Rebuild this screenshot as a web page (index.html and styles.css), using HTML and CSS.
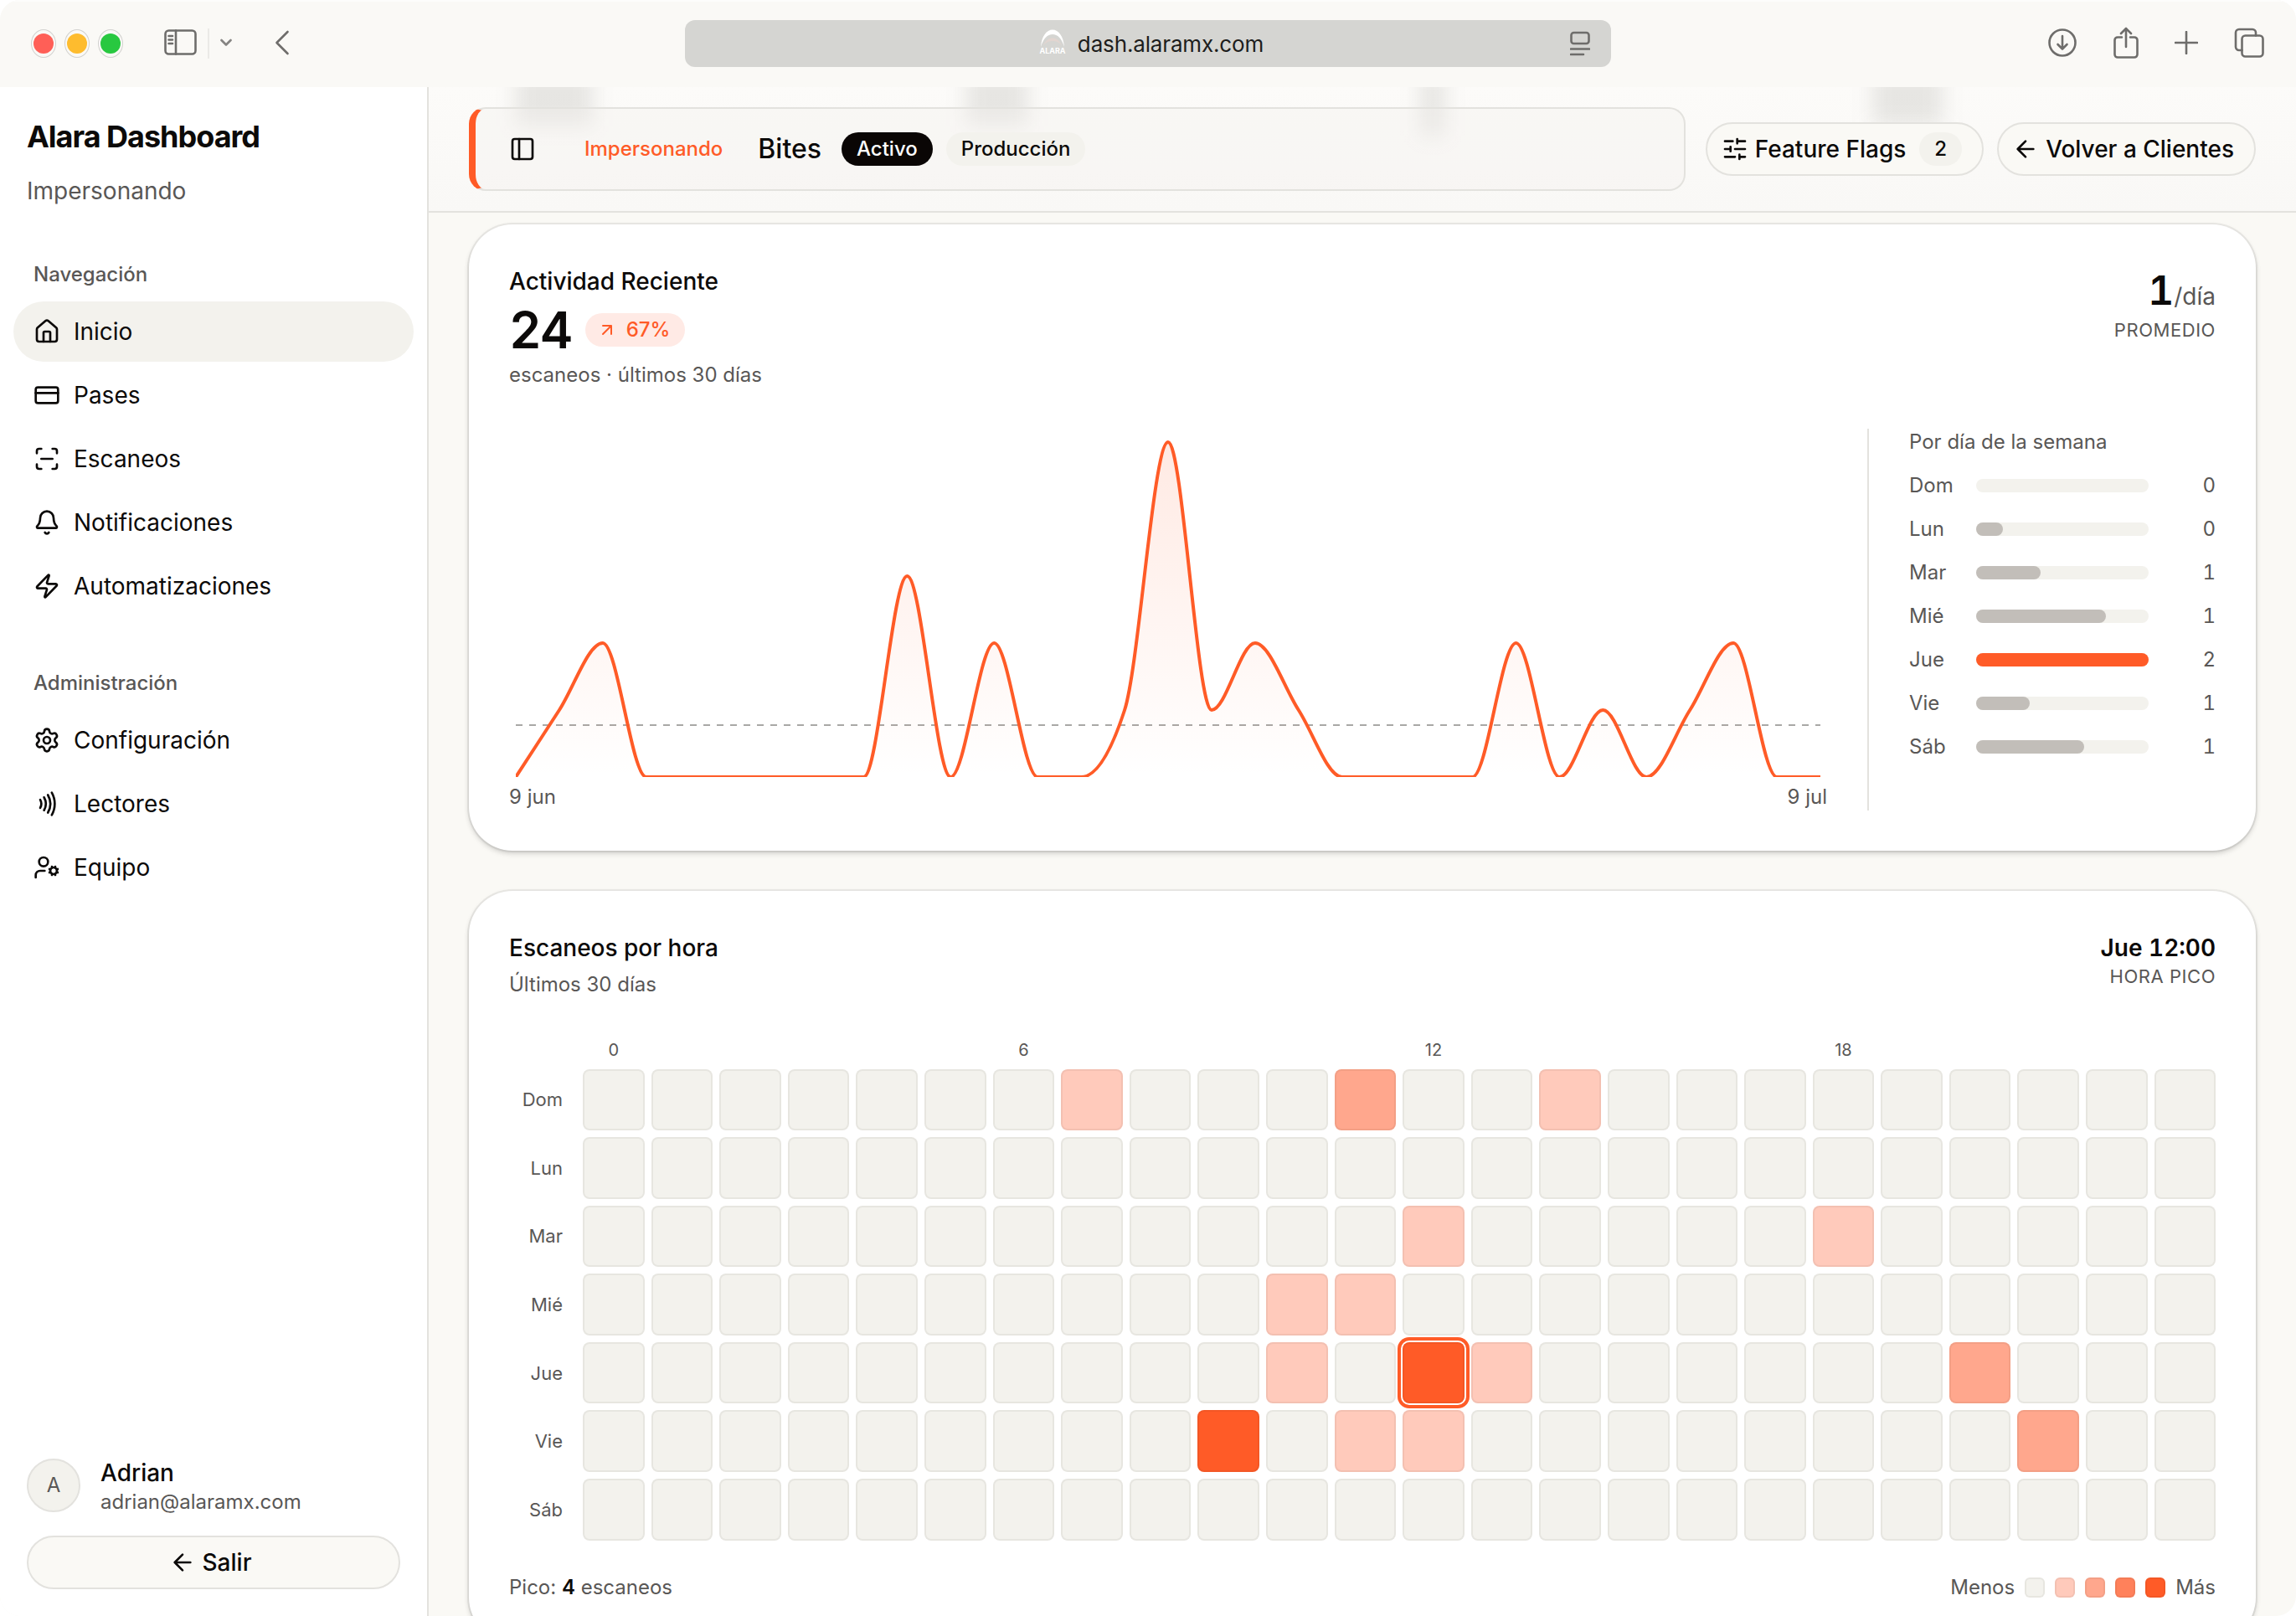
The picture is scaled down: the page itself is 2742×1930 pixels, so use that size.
FILE: index.html
```html
<!DOCTYPE html>
<html lang="es">
<head>
  <meta charset="UTF-8">
  <meta name="viewport" content="width=device-width, initial-scale=1">
  <title>Alara Dashboard</title>
  <link rel="stylesheet" href="styles.css">
</head>
<body>

<div class="window">

  <!-- Barra del navegador -->
  <div class="toolbar">
    <div class="toolbar-left">
      <div class="lights">
        <span class="light red"></span>
        <span class="light yellow"></span>
        <span class="light green"></span>
      </div>
      <svg class="tb-sidebar" width="40" height="32" viewBox="0 0 40 32">
        <rect x="1.5" y="1.5" width="36" height="28" rx="4"/>
        <path d="M14 1.5v28M5.5 8h4.5M5.5 12.5h4.5M5.5 17h4.5"/>
      </svg>
      <span class="tb-divider"></span>
      <svg class="tb-chevron" width="14" height="10" viewBox="0 0 14 10"><path d="M1.5 2l5.500 5.500L12.500 2"/></svg>
      <svg class="tb-back" width="18" height="30" viewBox="0 0 18 30"><path d="M15.500 2L2.500 15l13 13"/></svg>
    </div>

    <div class="urlbar">
      <svg class="favicon" width="34" height="34" viewBox="0 0 34 34">
        <path d="M3 22C4 9 10 1.500 17 1.500S30 9 31 22C28 12 23 7 17 7S6 12 3 22z" fill="#fff"/>
        <path d="M6 20c3-6 7-8.500 11-8.500S25 14 28 20c-4-4-7-5-11-5s-7 1-11 5z" fill="#e2d5d0"/>
        <text x="17" y="30" text-anchor="middle">ALARA</text>
      </svg>
      <span class="url">dash.alaramx.com</span>
      <svg class="reader" width="24" height="30" viewBox="0 0 24 30">
        <rect x="1.500" y="2" width="21" height="13" rx="3"/>
        <path d="M1 21.500h22M1 28h15"/>
      </svg>
    </div>

    <div class="toolbar-right">
      <svg width="36" height="36" viewBox="0 0 36 36"><circle cx="18" cy="18" r="15.500"/><path d="M18 10v15M12.500 20l5.500 5.500 5.500-5.500"/></svg>
      <svg width="30" height="38" viewBox="0 0 30 38"><path d="M10 12.500H5a3.500 3.500 0 0 0-3.500 3.500v17A3.500 3.500 0 0 0 5 36.500h20a3.500 3.500 0 0 0 3.500-3.500V16a3.500 3.500 0 0 0-3.500-3.500h-5M15 24V2M9 8l6-6 6 6"/></svg>
      <svg width="28" height="28" viewBox="0 0 28 28"><path d="M14 1v26M1 14h26"/></svg>
      <svg width="36" height="36" viewBox="0 0 36 36"><rect x="9.500" y="9.500" width="25" height="25" rx="4"/><path d="M9.500 27H6a4 4 0 0 1-4-4V6a4 4 0 0 1 4-4h16a4 4 0 0 1 4 4v3.500"/></svg>
    </div>
  </div>

  <div class="app">

    <!-- Menu lateral -->
    <aside class="sidebar">
      <div class="brand">
        <h1>Alara Dashboard</h1>
        <p>Impersonando</p>
      </div>

      <nav class="nav-group">
        <h2>Navegación</h2>
        <a class="nav-item active" href="#">
          <svg class="icon" viewBox="0 0 24 24"><path d="M15 21v-8a1 1 0 0 0-1-1h-4a1 1 0 0 0-1 1v8"/><path d="M3 10a2 2 0 0 1 .709-1.528l7-6a2 2 0 0 1 2.582 0l7 6A2 2 0 0 1 21 10v9a2 2 0 0 1-2 2H5a2 2 0 0 1-2-2z"/></svg>
          <span>Inicio</span>
        </a>
        <a class="nav-item" href="#">
          <svg class="icon" viewBox="0 0 24 24"><rect x="2" y="5" width="20" height="14" rx="2"/><path d="M2 10h20"/></svg>
          <span>Pases</span>
        </a>
        <a class="nav-item" href="#">
          <svg class="icon" viewBox="0 0 24 24"><path d="M3 7V5a2 2 0 0 1 2-2h2M17 3h2a2 2 0 0 1 2 2v2M21 17v2a2 2 0 0 1-2 2h-2M7 21H5a2 2 0 0 1-2-2v-2M7 12h10"/></svg>
          <span>Escaneos</span>
        </a>
        <a class="nav-item" href="#">
          <svg class="icon" viewBox="0 0 24 24"><path d="M10.268 21a2 2 0 0 0 3.464 0"/><path d="M3.262 15.326A1 1 0 0 0 4 17h16a1 1 0 0 0 .74-1.673C19.41 13.956 18 12.499 18 8A6 6 0 0 0 6 8c0 4.499-1.411 5.956-2.738 7.326"/></svg>
          <span>Notificaciones</span>
        </a>
        <a class="nav-item" href="#">
          <svg class="icon" viewBox="0 0 24 24"><path d="M4 14a1 1 0 0 1-.78-1.63l9.9-10.2a.5.5 0 0 1 .86.46l-1.92 6.02A1 1 0 0 0 13 10h7a1 1 0 0 1 .78 1.63l-9.9 10.2a.5.5 0 0 1-.86-.46l1.92-6.02A1 1 0 0 0 11 14z"/></svg>
          <span>Automatizaciones</span>
        </a>
      </nav>

      <nav class="nav-group">
        <h2>Administración</h2>
        <a class="nav-item" href="#">
          <svg class="icon" viewBox="0 0 24 24"><path d="M9.671 4.136a2.34 2.34 0 0 1 4.659 0 2.34 2.34 0 0 0 3.319 1.915 2.34 2.34 0 0 1 2.33 4.033 2.34 2.34 0 0 0 0 3.831 2.34 2.34 0 0 1-2.33 4.033 2.34 2.34 0 0 0-3.319 1.915 2.34 2.34 0 0 1-4.659 0 2.34 2.34 0 0 0-3.32-1.915 2.34 2.34 0 0 1-2.33-4.033 2.34 2.34 0 0 0 0-3.831A2.34 2.34 0 0 1 6.35 6.051a2.34 2.34 0 0 0 3.319-1.915"/><circle cx="12" cy="12" r="3"/></svg>
          <span>Configuración</span>
        </a>
        <a class="nav-item" href="#">
          <svg class="icon" viewBox="0 0 24 24"><path d="M6 8.32a7.43 7.43 0 0 1 0 7.36M9.46 6.21a11.76 11.76 0 0 1 0 11.58M12.91 4.1a15.91 15.91 0 0 1 .01 15.8M16.37 2a20.16 20.16 0 0 1 0 20"/></svg>
          <span>Lectores</span>
        </a>
        <a class="nav-item" href="#">
          <svg class="icon" viewBox="0 0 24 24"><path d="M10 15H6a4 4 0 0 0-4 4v2"/><path d="m14.305 16.53.923-.382M15.228 13.852l-.923-.383M16.852 12.228l-.383-.923M16.852 17.772l-.383.924M19.148 12.228l.383-.923M19.53 18.696l-.382-.924M20.772 13.852l.924-.383M20.772 16.148l.924.383"/><circle cx="18" cy="15" r="3"/><circle cx="9" cy="7" r="4"/></svg>
          <span>Equipo</span>
        </a>
      </nav>

      <div class="account">
        <div class="user">
          <span class="avatar">A</span>
          <div class="user-info">
            <p class="user-name">Adrian</p>
            <p class="user-mail">adrian@alaramx.com</p>
          </div>
        </div>
        <button class="btn logout">
          <svg class="icon" viewBox="0 0 24 24"><path d="m12 19-7-7 7-7M19 12H5"/></svg>
          <span>Salir</span>
        </button>
      </div>
    </aside>

    <main class="main">
      <header class="topbar">
        <!-- contenido que se difumina al pasar por debajo de la barra -->
        <i class="smudge s1"></i>
        <i class="smudge s2"></i>
        <i class="smudge s3"></i>
        <i class="smudge s4"></i>

        <div class="banner">
          <svg class="icon" viewBox="0 0 24 24"><rect x="3" y="3" width="18" height="18" rx="2"/><path d="M9 3v18"/></svg>
          <span class="banner-label">Impersonando</span>
          <span class="banner-name">Bites</span>
          <span class="badge dark">Activo</span>
          <span class="badge">Producción</span>
        </div>
        <button class="btn flags">
          <svg class="icon" viewBox="0 0 24 24"><path d="M10 5H3M12 19H3M14 3v4M16 17v4M21 12h-9M21 19h-5M21 5h-7M8 10v4M8 12H3"/></svg>
          <span>Feature Flags</span>
          <span class="badge">2</span>
        </button>
        <button class="btn back">
          <svg class="icon" viewBox="0 0 24 24"><path d="m12 19-7-7 7-7M19 12H5"/></svg>
          <span>Volver a Clientes</span>
        </button>
      </header>

      <div class="content">

        <!-- Actividad reciente -->
        <section class="card">
          <div class="card-head">
            <div>
              <h3>Actividad Reciente</h3>
              <div class="total">
                <strong>24</strong>
                <span class="badge trend">
                  <svg viewBox="0 0 24 24"><path d="M7 7h10v10M7 17 17 7"/></svg>
                  <span>67%</span>
                </span>
              </div>
              <p class="sub">escaneos · últimos 30 días</p>
            </div>
            <div class="stat">
              <p class="average"><strong>1</strong><span>/día</span></p>
              <p class="caption">PROMEDIO</p>
            </div>
          </div>

          <div class="activity">
            <div class="chart">
              <svg width="1574" height="424" viewBox="0 0 1574 424">
                <defs>
                  <linearGradient id="fill" x1="0" y1="16" x2="0" y2="416" gradientUnits="userSpaceOnUse">
                    <stop offset="0" stop-color="#ff5b27" stop-opacity="0.13"/>
                    <stop offset="1" stop-color="#ff5b27" stop-opacity="0"/>
                  </linearGradient>
                  <clipPath id="plot"><rect x="8" y="0" width="1558" height="416"/></clipPath>
                </defs>
                <path class="avg" d="M8 354H1566"/>
                <g clip-path="url(#plot)">
                  <path id="area" fill="url(#fill)"/>
                  <path id="line" class="line"/>
                </g>
              </svg>
              <div class="axis"><span>9 jun</span><span>9 jul</span></div>
            </div>

            <div class="weekdays">
              <h4>Por día de la semana</h4>
              <div class="day"><span>Dom</span><div class="track"></div><b>0</b></div>
              <div class="day"><span>Lun</span><div class="track"><i style="width: 15.6%"></i></div><b>0</b></div>
              <div class="day"><span>Mar</span><div class="track"><i style="width: 37.5%"></i></div><b>1</b></div>
              <div class="day"><span>Mié</span><div class="track"><i style="width: 75%"></i></div><b>1</b></div>
              <div class="day top"><span>Jue</span><div class="track"><i style="width: 100%"></i></div><b>2</b></div>
              <div class="day"><span>Vie</span><div class="track"><i style="width: 31.25%"></i></div><b>1</b></div>
              <div class="day"><span>Sáb</span><div class="track"><i style="width: 62.5%"></i></div><b>1</b></div>
            </div>
          </div>
        </section>

        <!-- Mapa de calor por hora -->
        <section class="card">
          <div class="card-head">
            <div>
              <h3>Escaneos por hora</h3>
              <p class="sub sub-gap">Últimos 30 días</p>
            </div>
            <div class="stat">
              <p class="peak-hour">Jue 12:00</p>
              <p class="caption caption-tight">HORA PICO</p>
            </div>
          </div>

          <div class="heatmap" id="heatmap"></div>

          <div class="card-foot">
            <p>Pico: <strong>4</strong> escaneos</p>
            <div class="legend">
              <span>Menos</span>
              <i class="swatch"></i>
              <i class="swatch l1"></i>
              <i class="swatch l2"></i>
              <i class="swatch l3"></i>
              <i class="swatch l4"></i>
              <span>Más</span>
            </div>
          </div>
        </section>

      </div>
    </main>
  </div>
</div>

<script src="script.js"></script>
</body>
</html>
```
FILE: script.js
```js
// Escaneos diarios, 9 jun - 9 jul
const scans = [0,1,2,0,0,0,0,0,0,3,0,2,0,0,1,5,1,2,1,0,0,0,0,2,0,1,0,1,2,0,0];

const base = 416;
const unit = 80;
const step = 1558 / (scans.length - 1);
const pts = scans.map((v, i) => [8 + i * step, base - v * unit]);

// Pendientes de una cubica monotona, para que la curva no pase de los datos
const slopes = pts.map((p, i) => {
  if (i === 0 || i === pts.length - 1) return 0;
  const a = (p[1] - pts[i - 1][1]) / step;
  const b = (pts[i + 1][1] - p[1]) / step;
  if (a * b <= 0) return 0;
  return Math.sign(a) * Math.min(Math.abs(a), Math.abs(b), Math.abs(a + b) / 4) * 2;
});
const last = pts.length - 1;
slopes[0] = (3 * (pts[1][1] - pts[0][1]) / step - slopes[1]) / 2;
slopes[last] = (3 * (pts[last][1] - pts[last - 1][1]) / step - slopes[last - 1]) / 2;

let d = `M${pts[0][0]},${pts[0][1]}`;
for (let i = 1; i < pts.length; i++) {
  const [x0, y0] = pts[i - 1];
  const [x1, y1] = pts[i];
  const t = step / 3;
  d += `C${x0 + t},${y0 + slopes[i - 1] * t} ${x1 - t},${y1 - slopes[i] * t} ${x1},${y1}`;
}
document.getElementById('line').setAttribute('d', d);
document.getElementById('area').setAttribute('d', `${d}V${base}H8Z`);

// Mapa de calor: nivel de cada hora con escaneos
const week = [
  ['Dom', { 7: 1, 11: 2, 14: 1 }],
  ['Lun', {}],
  ['Mar', { 12: 1, 18: 1 }],
  ['Mié', { 10: 1, 11: 1 }],
  ['Jue', { 10: 1, 12: 4, 13: 1, 20: 2 }],
  ['Vie', { 9: 4, 11: 1, 12: 1, 21: 2 }],
  ['Sáb', {}]
];

let html = '<span></span>';
for (let h = 0; h < 24; h++) {
  html += `<span class="hour">${h % 6 === 0 ? h : ''}</span>`;
}
week.forEach(([name, hours]) => {
  html += `<span class="row-label">${name}</span>`;
  for (let h = 0; h < 24; h++) {
    const level = hours[h] ? ` l${hours[h]}` : '';
    const peak = name === 'Jue' && h === 12 ? ' peak' : '';
    html += `<i class="cell${level}${peak}"></i>`;
  }
});
document.getElementById('heatmap').innerHTML = html;
```
FILE: styles.css
```css
:root {
  --bg: #faf9f5;
  --surface: #ffffff;
  --muted: #f3f2ed;
  --border: #e3e2de;
  --text: #0c0a09;
  --text-muted: #595756;
  --accent: #ff5b27;
  --chrome-icon: #6e6d6b;
  --font-main: Inter, "Liberation Sans", sans-serif;
}

* {
  box-sizing: border-box;
  margin: 0;
  padding: 0;
}

body {
  background: #fff;
  font-family: var(--font-main);
  font-size: 28px;
  line-height: 40px;
  color: var(--text);
  overflow: hidden;
}

.window {
  width: 2742px;
  height: 1930px;
  border-radius: 24px;
  overflow: hidden;
  background: var(--bg);
}

/* Barra del navegador */
.toolbar {
  height: 104px;
  display: grid;
  grid-template-columns: 818px 1106px 1fr;
  align-items: center;
  background: #faf9f6;
  box-shadow: inset 0 2px 0 #fdfdfc;
}

.toolbar svg {
  margin-bottom: 2px;
  fill: none;
  stroke: var(--chrome-icon);
  stroke-width: 2.6;
  stroke-linecap: round;
  stroke-linejoin: round;
}

.toolbar-left {
  display: flex;
  align-items: center;
  padding-left: 40px;
}

.lights {
  display: flex;
  gap: 16px;
}

.light {
  position: relative;
  width: 24px;
  height: 24px;
  border-radius: 50%;
}

.light::after {
  content: "";
  position: absolute;
  inset: -5px -3px;
  border: 1px solid rgba(0, 0, 0, 0.16);
  border-radius: 50%;
}

.light.red { background: #ff5f57; }
.light.yellow { background: #febc2e; }
.light.green { background: #28c840; }

.tb-sidebar { margin-left: 52px; }

.tb-divider {
  width: 2px;
  height: 36px;
  margin-left: 12px;
  background: #ebeae7;
}

.toolbar .tb-chevron {
  margin-left: 13px;
  stroke: #858482;
}

.tb-back { margin-left: 51px; }

.urlbar {
  position: relative;
  height: 56px;
  display: flex;
  align-items: center;
  justify-content: center;
  gap: 13px;
  padding-left: 7px;
  border-radius: 12px;
  background: #d5d5d2;
  color: #1d1d1c;
}

.favicon text {
  font-size: 9px;
  font-weight: 700;
  fill: #fff;
  stroke: none;
}

.toolbar .favicon { stroke: none; }

.url {
  padding-top: 1px;
  font-size: 26px;
  letter-spacing: -0.15px;
}

.reader {
  position: absolute;
  right: 25px;
  top: 13px;
}

.toolbar-right {
  display: flex;
  align-items: center;
  justify-content: flex-end;
  gap: 43px;
  padding-right: 38px;
}

/* Estructura */
.app {
  display: flex;
  height: 1826px;
}

.sidebar {
  width: 512px;
  display: flex;
  flex-direction: column;
  background: var(--surface);
  border-right: 2px solid var(--border);
  flex-shrink: 0;
}

.brand {
  padding: 31px 32px 0;
  height: 176px;
}

.brand h1 {
  font-size: 36px;
  line-height: 56px;
  font-weight: 700;
  letter-spacing: -0.028em;
}

.brand p {
  margin-top: 17px;
  color: var(--text-muted);
}

.nav-group {
  display: flex;
  flex-direction: column;
  gap: 4px;
  padding: 16px;
  margin-bottom: 16px;
}

.nav-group h2 {
  height: 64px;
  margin-bottom: -4px;
  padding-left: 24px;
  font-size: 24px;
  line-height: 64px;
  font-weight: 500;
  color: var(--text-muted);
}

.nav-item {
  height: 72px;
  display: flex;
  align-items: center;
  gap: 16px;
  padding: 0 24px;
  border-radius: 36px;
  color: var(--text);
  text-decoration: none;
}

.nav-item.active {
  background: var(--muted);
}

.icon,
.trend svg {
  width: 32px;
  height: 32px;
  flex-shrink: 0;
  fill: none;
  stroke: currentColor;
  stroke-width: 2;
  stroke-linecap: round;
  stroke-linejoin: round;
}

.account {
  margin-top: auto;
  padding: 0 32px 32px;
}

.user {
  display: flex;
  align-items: center;
  gap: 24px;
  height: 76px;
  margin-bottom: 22px;
}

.user-info { padding-top: 4px; }

.avatar {
  width: 64px;
  height: 64px;
  border: 2px solid var(--border);
  border-radius: 50%;
  background: var(--muted);
  color: var(--text-muted);
  font-size: 24px;
  line-height: 60px;
  text-align: center;
}

.user-name {
  line-height: 36px;
  font-weight: 500;
}

.user-mail {
  font-size: 24px;
  line-height: 34px;
  color: var(--text-muted);
}

.btn {
  height: 64px;
  display: flex;
  align-items: center;
  border: 2px solid var(--border);
  border-radius: 32px;
  background: var(--bg);
  color: var(--text);
  font: 500 28px/40px var(--font-main);
  white-space: nowrap;
}

.logout {
  width: 446px;
  justify-content: center;
  gap: 8px;
  padding-right: 8px;
}

/* Barra superior */
.main {
  flex: 1;
  min-width: 0;
}

.topbar {
  position: relative;
  height: 150px;
  display: flex;
  align-items: center;
  gap: 16px;
  padding: 0 48px;
  border-bottom: 2px solid var(--border);
  background: linear-gradient(#fcfbf9, #f9f8f6);
  overflow: hidden;
}

.topbar > * {
  position: relative;
}

.topbar .smudge {
  position: absolute;
  top: -20px;
  height: 66px;
  background: rgba(80, 80, 70, 0.12);
  filter: blur(12px);
}

.s1 { left: 104px; width: 92px; }
.s2 { left: 642px; width: 74px; }
.topbar .s3 { left: 1184px; width: 30px; height: 78px; }
.s4 { left: 1724px; width: 84px; }

.banner {
  flex: 1;
  height: 100px;
  display: flex;
  align-items: center;
  margin-right: 8px;
  padding-left: 40px;
  border: 2px solid var(--border);
  border-left: 8px solid var(--accent);
  border-radius: 20px;
  background: rgba(243, 242, 237, 0.35);
}

.banner-label {
  margin-left: 58px;
  font-size: 24px;
  font-weight: 500;
  color: var(--accent);
}

.banner-name {
  margin: 0 24px 0 42px;
  font-size: 32px;
  font-weight: 500;
}

.badge {
  height: 40px;
  display: inline-flex;
  align-items: center;
  padding: 0 18px;
  border-radius: 20px;
  background: var(--muted);
  font-size: 24px;
  font-weight: 500;
}

.badge.dark {
  margin-right: 16px;
  background: #0a0605;
  color: #fff;
}

.flags {
  padding: 0 24px 0 17px;
}

.flags .icon { margin-right: 8px; }
.flags .badge { margin-left: 16px; }

.back {
  padding: 0 24px 0 16px;
  gap: 8px;
}

/* Tarjetas */
.content {
  display: flex;
  flex-direction: column;
  gap: 48px;
  padding: 14px 48px;
}

.card {
  padding: 48px;
  border-radius: 52px;
  background: var(--surface);
  box-shadow: 0 0 0 2px rgba(12, 10, 9, 0.06), 0 2px 6px rgba(0, 0, 0, 0.1), 0 4px 8px -2px rgba(0, 0, 0, 0.14);
}

.card-head {
  display: flex;
  justify-content: space-between;
  margin-bottom: 48px;
}

.card h3 {
  font-size: 28px;
  line-height: 40px;
  font-weight: 500;
}

.total {
  height: 76px;
  display: flex;
  align-items: center;
  gap: 16px;
}

.total strong {
  font-size: 60px;
  font-weight: 600;
  letter-spacing: -0.025em;
  font-variant-numeric: tabular-nums;
}

.trend {
  gap: 8px;
  background: #ffeae5;
  color: var(--accent);
}

.trend svg {
  width: 24px;
  height: 24px;
  margin: 0 3px 0 -4px;
}

.sub {
  font-size: 24px;
  line-height: 32px;
  color: var(--text-muted);
}

.sub-gap { margin-top: 8px; }

.stat {
  text-align: right;
}

.average {
  height: 62px;
  line-height: 62px;
  color: var(--text-muted);
}

.average strong {
  font-size: 48px;
  font-weight: 600;
  color: var(--text);
  font-variant-numeric: tabular-nums;
}

.caption {
  font-size: 22px;
  line-height: 32px;
  letter-spacing: 0.025em;
  color: var(--text-muted);
}

.caption-tight { line-height: 28px; }

.peak-hour {
  font-weight: 600;
  font-variant-numeric: tabular-nums;
}

/* Grafica */
.activity {
  display: flex;
  gap: 48px;
}

.chart {
  width: 1574px;
}

.chart svg {
  display: block;
}

.line {
  fill: none;
  stroke: var(--accent);
  stroke-width: 4;
}

.avg {
  stroke: #a9a8a6;
  stroke-width: 2;
  stroke-dasharray: 8 8;
}

.axis {
  display: flex;
  justify-content: space-between;
  font-size: 24px;
  line-height: 32px;
  color: var(--text-muted);
}

.weekdays {
  flex: 1;
  padding-left: 48px;
  border-left: 2px solid var(--border);
  font-size: 24px;
  line-height: 32px;
  color: var(--text-muted);
}

.weekdays h4 {
  font-size: 24px;
  font-weight: 400;
}

.day {
  display: grid;
  grid-template-columns: 56px 1fr 56px;
  align-items: center;
  gap: 24px;
  margin-top: 20px;
}

.day b {
  font-weight: 400;
  text-align: right;
  font-variant-numeric: tabular-nums;
}

.track {
  height: 16px;
  border-radius: 8px;
  background: var(--muted);
}

.track i {
  display: block;
  height: 100%;
  border-radius: 8px;
  background: #c2beb9;
}

.day.top .track i {
  background: var(--accent);
}

/* Mapa de calor */
.heatmap {
  display: grid;
  grid-template-columns: 80px repeat(24, 1fr);
  gap: 8px;
  color: var(--text-muted);
}

.hour {
  font-size: 20px;
  line-height: 28.5px;
  text-align: center;
}

.row-label {
  align-self: center;
  padding-right: 16px;
  text-align: right;
  font-size: 22px;
  line-height: 32px;
}

.cell,
.swatch {
  border-radius: 8px;
  background: var(--muted);
  box-shadow: inset 0 0 0 2px rgba(12, 10, 9, 0.05);
}

.cell {
  aspect-ratio: 1;
}

.l1 { background: #ffcabb; }
.l2 { background: #ffa78d; }
.l3 { background: #ff815b; }
.l4 { background: var(--accent); }

.peak {
  box-shadow: inset 0 0 0 2px rgba(12, 10, 9, 0.05), 0 0 0 2px #fff, 0 0 0 6px var(--accent);
}

.card-foot {
  display: flex;
  justify-content: space-between;
  margin-top: 40px;
  font-size: 24px;
  line-height: 32px;
  color: var(--text-muted);
}

.card-foot strong {
  font-weight: 600;
  color: var(--text);
}

.legend {
  display: flex;
  align-items: center;
  gap: 12px;
}

.swatch {
  width: 24px;
  height: 24px;
  border-radius: 6px;
}
```
